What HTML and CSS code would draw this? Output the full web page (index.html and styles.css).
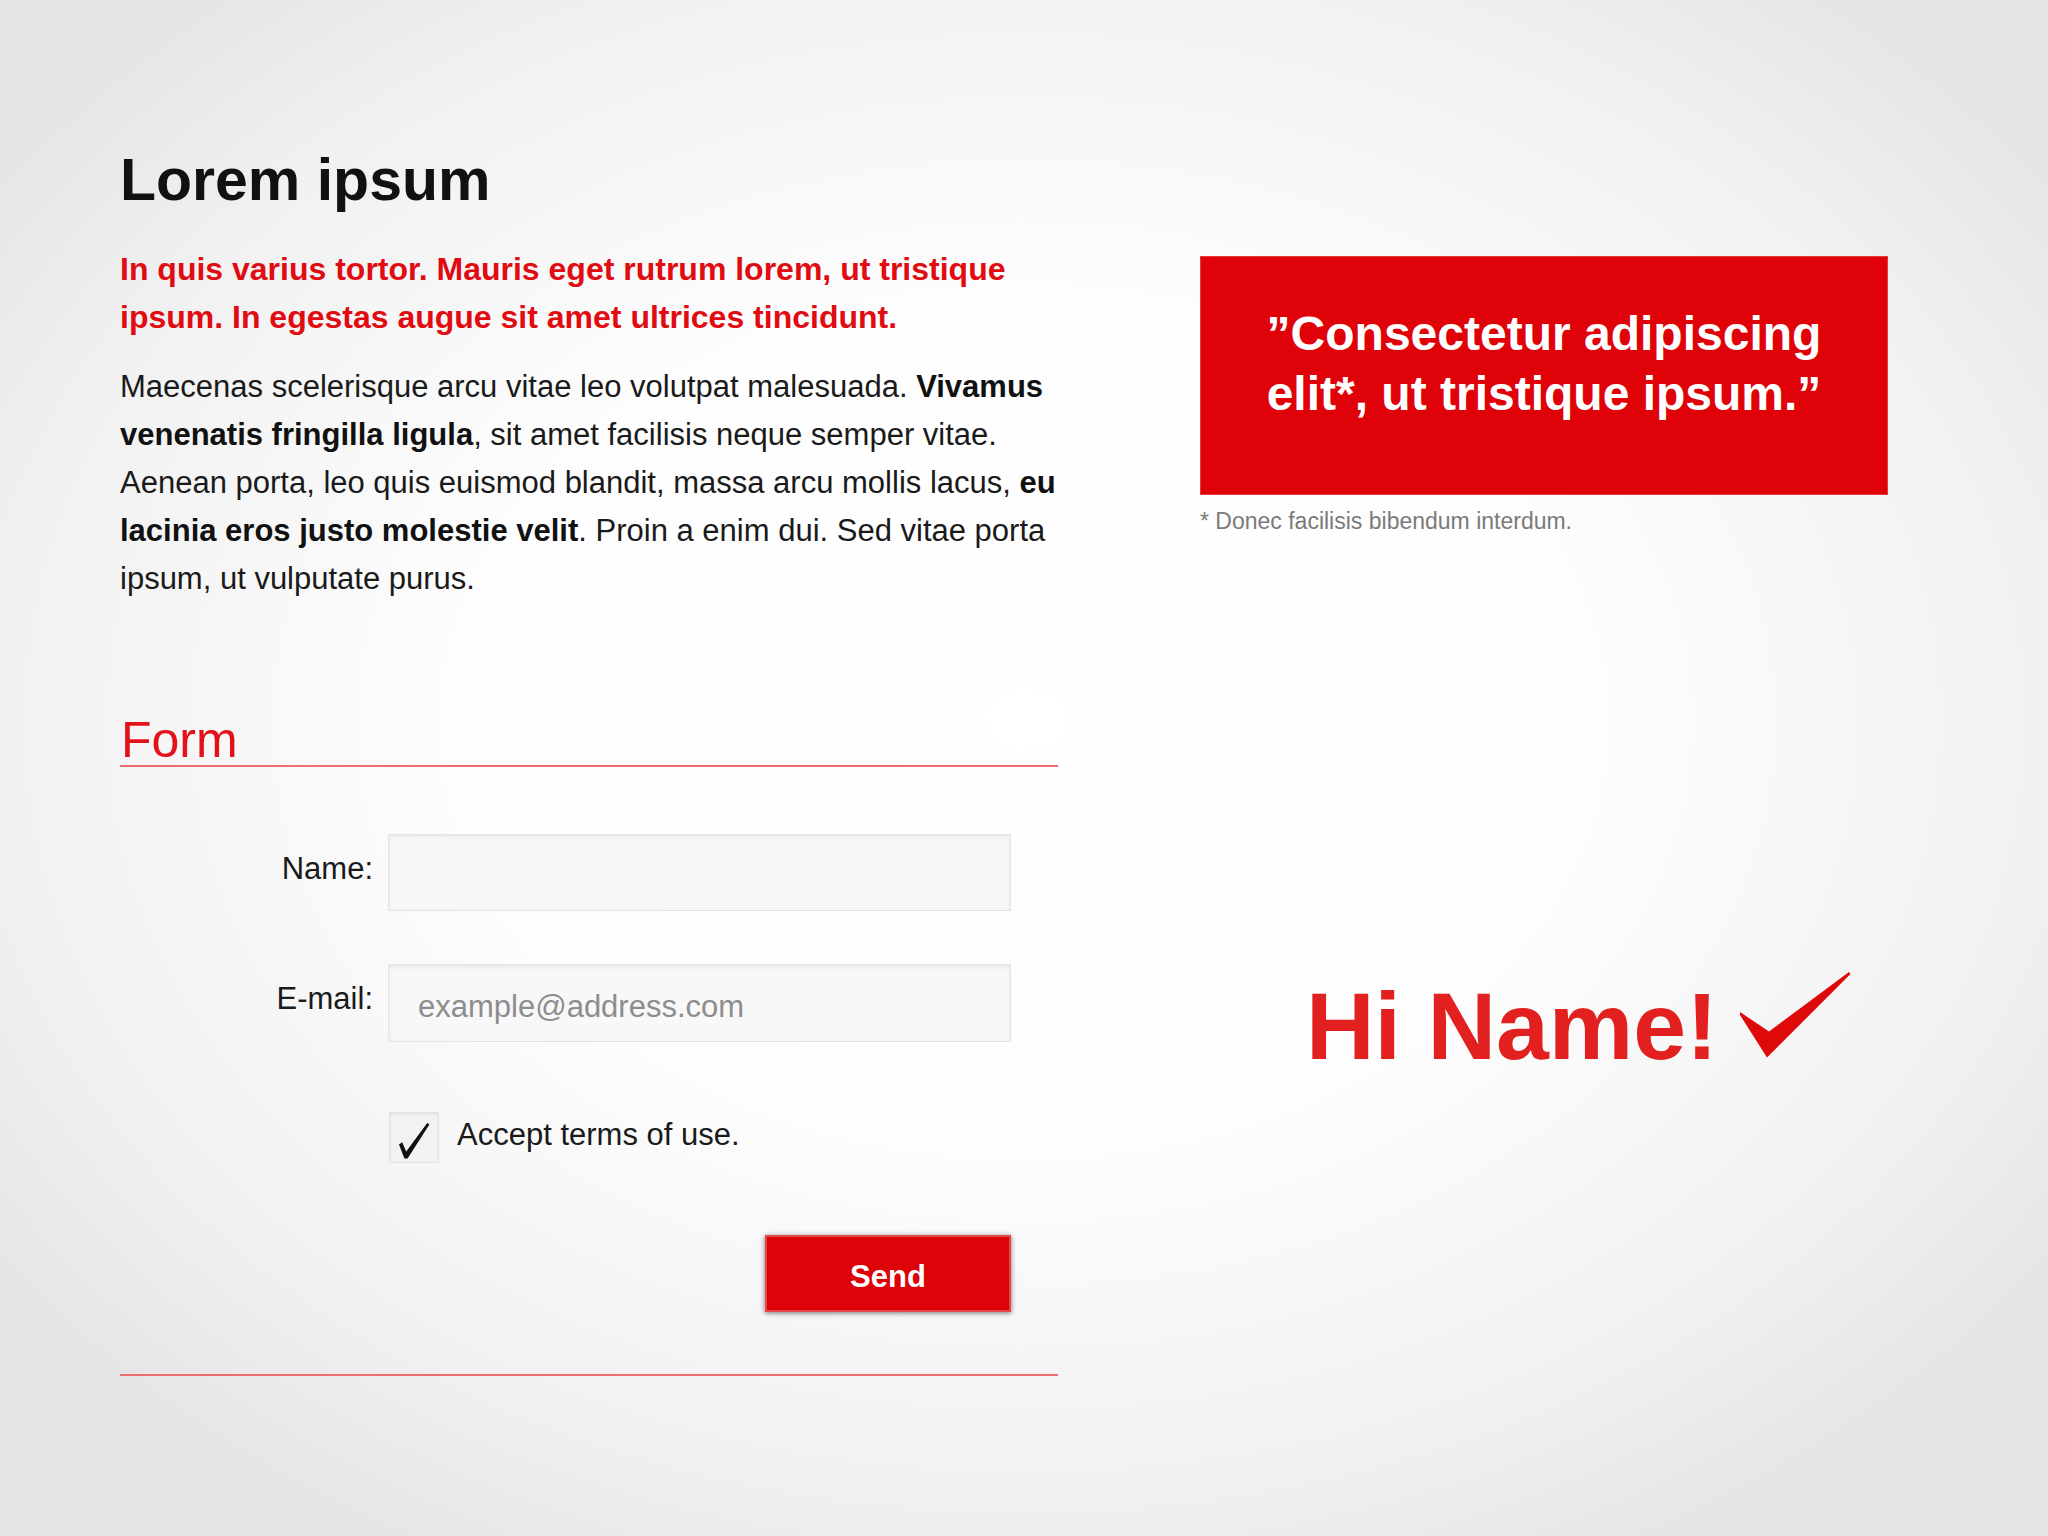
FILE: index.html
```html
<!DOCTYPE html>
<html lang="en">
<head>
<meta charset="utf-8">
<title>Lorem ipsum</title>
<link rel="stylesheet" href="styles.css">
</head>
<body>
<div class="page">
  <main class="main">
    <h1 class="title">Lorem ipsum</h1>
    <p class="lead">In quis varius tortor. Mauris eget rutrum lorem, ut tristique ipsum. In egestas augue sit amet ultrices tincidunt.</p>
    <p class="text"><span>Maecenas scelerisque arcu vitae leo volutpat malesuada.</span> <b>Vivamus</b> <b>venenatis fringilla ligula</b><span>, sit amet facilisis neque semper vitae.</span> <span>Aenean porta, leo quis euismod blandit, massa arcu mollis lacus,</span> <b>eu</b> <b>lacinia eros justo molestie velit</b><span>. Proin a enim dui. Sed vitae porta</span> <span>ipsum, ut vulputate purus.</span></p>

    <section class="form-section">
      <h2 class="form-title">Form</h2>
      <form class="form">
        <div class="row">
          <label class="label" for="name">Name:</label>
          <input class="field" id="name" type="text">
        </div>
        <div class="row row-email">
          <label class="label" for="email">E-mail:</label>
          <input class="field field-email" id="email" type="text" placeholder="example@address.com">
        </div>
        <div class="row row-terms">
          <span class="checkbox">
            <svg class="tick" width="50" height="51" viewBox="0 0 50 51" aria-hidden="true">
              <path d="M10 32.5 L13.2 30.2 L17.2 39.5 L38.2 11 L40.4 12.6 L18.6 46.4 L15.4 46.4 Z" fill="#111"/>
            </svg>
          </span>
          <span class="terms">Accept terms of use.</span>
        </div>
        <div class="row row-send">
          <button class="send" type="button">Send</button>
        </div>
      </form>
    </section>
  </main>

  <aside class="side">
    <blockquote class="quote">”Consectetur adipiscing elit*, ut tristique ipsum.”</blockquote>
    <p class="note">* Donec facilisis bibendum interdum.</p>
    <div class="greeting">
      <span class="greeting-text">Hi Name!</span>
      <svg class="check" width="130" height="110" viewBox="0 0 130 110" aria-hidden="true">
        <path d="M8 52 L37 71.5 L117 12 L118.5 14 L35 97.5 L8 55 Z" fill="#de0a0a"/>
      </svg>
    </div>
  </aside>
</div>
</body>
</html>
```
FILE: styles.css
```css
html, body {
  margin: 0;
  padding: 0;
}

body {
  min-height: 1536px;
  font-family: "Liberation Sans", Arial, Helvetica, sans-serif;
  color: #151515;
  background: radial-gradient(ellipse 62% 62% at 50% 47%, #ffffff 0%, #fdfdfd 45%, #f1f1f1 80%, #e5e5e5 100%);
  background-color: #e5e5e5;
}

.page {
  display: grid;
  grid-template-columns: 938px 688px;
  column-gap: 142px;
  padding: 144px 0 0 120px;
}

.title {
  margin: 0;
  font-size: 59px;
  line-height: 72px;
  font-weight: bold;
  color: #111;
}

.lead {
  margin: 29px 0 0;
  font-size: 32px;
  line-height: 48px;
  font-weight: bold;
  color: #e10b12;
}

.text {
  margin: 22px 0 0;
  font-size: 31px;
  line-height: 48px;
  color: #1a1a1a;
}

.text b {
  color: #111;
}

.form-section {
  margin-top: 112px;
}

.form-title {
  margin: 0;
  padding-left: 1px;
  font-size: 50px;
  line-height: 50px;
  font-weight: normal;
  color: #e2111a;
  border-bottom: 2px solid #ee6d70;
}

.form {
  display: flex;
  flex-direction: column;
  padding: 67px 0 62px;
  border-bottom: 2px solid #ee6d70;
}

.row {
  display: flex;
  align-items: center;
}

.label {
  width: 253px;
  margin-right: 15px;
  padding-bottom: 8px;
  text-align: right;
  font-size: 31px;
  color: #1a1a1a;
}

.field {
  box-sizing: border-box;
  width: 623px;
  height: 77px;
  margin: 0;
  padding: 8px 0 0 29px;
  border: 1px solid #e3e3e3;
  border-radius: 0;
  background: #f8f8f8;
  box-shadow: inset 0 2px 4px rgba(0, 0, 0, 0.07);
  font-family: "Liberation Sans", Arial, sans-serif;
  font-size: 31px;
  color: #333;
  outline: none;
}

.field::placeholder {
  color: #8d8d8d;
  opacity: 1;
}

.row-email {
  margin-top: 53px;
}

.field-email {
  height: 78px;
}

.row-terms {
  margin-top: 70px;
  padding-left: 269px;
}

.checkbox {
  display: block;
  box-sizing: border-box;
  width: 50px;
  height: 51px;
  border: 1px solid #e2e2e2;
  background: #f2f2f2;
  box-shadow: inset 0 1px 3px rgba(0, 0, 0, 0.08);
  position: relative;
}

.tick {
  position: absolute;
  left: -1px;
  top: -1px;
}

.terms {
  margin-left: 18px;
  padding-bottom: 5px;
  font-size: 31px;
  color: #1a1a1a;
}

.row-send {
  margin-top: 72px;
  padding-left: 645px;
}

.send {
  box-sizing: border-box;
  width: 246px;
  height: 77px;
  margin: 0;
  padding: 6px 0 0;
  border: 2px solid #e4464b;
  background: #dc0309;
  box-shadow: 0 1px 5px rgba(0, 0, 0, 0.55);
  color: #fff;
  font-family: "Liberation Sans", Arial, sans-serif;
  font-size: 31px;
  font-weight: bold;
  cursor: pointer;
}

.side {
  display: flex;
  flex-direction: column;
  align-items: flex-start;
}

.quote {
  box-sizing: border-box;
  width: 688px;
  height: 239px;
  margin: 112px 0 0;
  padding: 47px 30px 0;
  border: 1px solid #e6383d;
  background: #df0309;
  color: #fff;
  font-size: 48px;
  line-height: 60px;
  font-weight: bold;
  text-align: center;
}

.note {
  margin: 12px 0 0;
  font-size: 23px;
  line-height: 28px;
  color: #7a7a7a;
}

.greeting {
  display: flex;
  align-items: flex-start;
  margin: 443px 0 0 106px;
}

.greeting-text {
  font-size: 95px;
  line-height: 96px;
  font-weight: bold;
  color: #e2201f;
}

.check {
  display: block;
  margin: -18px 0 0 14px;
}
```
